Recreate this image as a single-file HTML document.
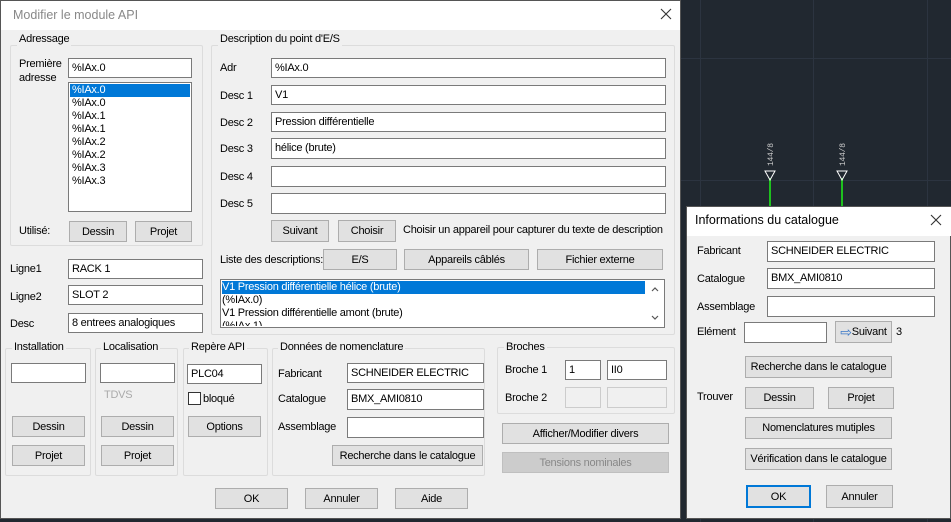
<!DOCTYPE html>
<html><head><meta charset="utf-8"><style>
*{box-sizing:border-box;margin:0;padding:0}
body{width:951px;height:522px;overflow:hidden;background:#212830;font-family:"Liberation Sans",sans-serif;font-size:11px;letter-spacing:-0.25px;color:#000;position:relative}
div,span{position:absolute}
.t{white-space:nowrap;line-height:14px}
.in{background:#fff;border:1px solid #7a7a7a;padding:2px 3px;white-space:nowrap;line-height:14px;overflow:hidden}
.dis{background:#f0f0f0;border:1px solid #ccc}
.b{background:#e1e1e1;border:1px solid #adadad;text-align:center;white-space:nowrap;display:flex;align-items:center;justify-content:center}
.g{border:1px solid #dcdcdc;border-radius:2px}
.gl{background:#f0f0f0;padding:0 2px;white-space:nowrap;line-height:14px}
.grid{background:#2c3440}
.x{font-size:16px;color:#333;font-weight:normal}
</style></head><body>
<div class="grid" style="left:700px;top:0;width:1px;height:522px"></div>
<div class="grid" style="left:813px;top:0;width:1px;height:522px"></div>
<div class="grid" style="left:927px;top:0;width:1px;height:522px"></div>
<div class="grid" style="left:681px;top:58px;width:270px;height:1px"></div>
<div class="grid" style="left:681px;top:180px;width:270px;height:1px"></div>
<div style="left:769px;top:178px;width:2px;height:30px;background:#1ec01e"></div>
<div style="left:841px;top:178px;width:2px;height:30px;background:#1ec01e"></div>
<svg style="position:absolute;left:760px;top:140px" width="100" height="45"><g fill="none" stroke="#fff" stroke-width="1"><path d="M5 31 L15 31 L10 40 Z"/><path d="M77 31 L87 31 L82 40 Z"/></g><text transform="translate(13,26) rotate(-90)" fill="#ccc" font-size="8" font-family="Liberation Mono">144/8</text><text transform="translate(85,26) rotate(-90)" fill="#ccc" font-size="8" font-family="Liberation Mono">144/8</text></svg>

<div style="left:0;top:0;width:681px;height:519px;background:#f0f0f0;border:1px solid #555"></div>
<div style="left:1px;top:1px;width:679px;height:29px;background:#fff"></div>
<div class="t" style="left:13px;top:8px;font-size:12.5px;color:#888;letter-spacing:0">Modifier le module API</div>
<svg style="position:absolute;left:660px;top:8px" width="12" height="12"><path d="M1 1L11 11M11 1L1 11" stroke="#333" stroke-width="1.1"/></svg>

<div class="g" style="left:10px;top:45px;width:193px;height:201px"></div>
<div class="gl" style="left:17px;top:32px">Adressage</div>
<div class="t" style="left:19px;top:57px">Première<br>adresse</div>
<div class="in" style="left:68px;top:58px;width:124px;height:20px">%IAx.0</div>
<div class="in" style="left:68px;top:82px;width:124px;height:130px;padding:1px"></div>
<div style="left:70px;top:84px;width:120px;height:13px;background:#0078d7"></div>
<div class="t" style="left:72px;top:84px;line-height:13px;color:#000">
<span style="position:static;color:#fff">%IAx.0</span><br>%IAx.0<br>%IAx.1<br>%IAx.1<br>%IAx.2<br>%IAx.2<br>%IAx.3<br>%IAx.3</div>
<div class="t" style="left:19px;top:224px">Utilisé:</div>
<div class="b" style="left:69px;top:221px;width:58px;height:21px">Dessin</div>
<div class="b" style="left:135px;top:221px;width:57px;height:21px">Projet</div>

<div class="g" style="left:211px;top:45px;width:464px;height:290px"></div>
<div class="gl" style="left:218px;top:32px">Description du point d'E/S</div>
<div class="t" style="left:220px;top:61px">Adr</div>
<div class="t" style="left:220px;top:89px">Desc 1</div>
<div class="t" style="left:220px;top:116px">Desc 2</div>
<div class="t" style="left:220px;top:142px">Desc 3</div>
<div class="t" style="left:220px;top:170px">Desc 4</div>
<div class="t" style="left:220px;top:197px">Desc 5</div>
<div class="in" style="left:271px;top:58px;width:395px;height:20px">%IAx.0</div>
<div class="in" style="left:271px;top:85px;width:395px;height:20px">V1</div>
<div class="in" style="left:271px;top:112px;width:395px;height:20px">Pression différentielle</div>
<div class="in" style="left:271px;top:138px;width:395px;height:21px">hélice (brute)</div>
<div class="in" style="left:271px;top:166px;width:395px;height:21px"></div>
<div class="in" style="left:271px;top:193px;width:395px;height:21px"></div>
<div class="b" style="left:271px;top:220px;width:58px;height:22px">Suivant</div>
<div class="b" style="left:338px;top:220px;width:58px;height:22px">Choisir</div>
<div class="t" style="left:403px;top:223px">Choisir un appareil pour capturer du texte de description</div>
<div class="t" style="left:220px;top:253px">Liste des descriptions:</div>
<div class="b" style="left:323px;top:249px;width:74px;height:21px">E/S</div>
<div class="b" style="left:404px;top:249px;width:125px;height:21px">Appareils câblés</div>
<div class="b" style="left:537px;top:249px;width:126px;height:21px">Fichier externe</div>
<div class="in" style="left:220px;top:279px;width:445px;height:49px;padding:0"></div>
<div style="left:222px;top:281px;width:423px;height:13px;background:#0078d7"></div>
<div style="left:222px;top:281px;width:423px;height:45px;overflow:hidden" class="t"><div class="t" style="position:static;line-height:13px"><span style="position:static;color:#fff">V1 Pression différentielle hélice (brute)</span><br>(%IAx.0)<br>V1 Pression différentielle amont (brute)<br>(%IAx.1)</div></div>
<svg style="position:absolute;left:649px;top:285px" width="12" height="40"><path d="M3 6L6 3L9 6M3 31L6 34L9 31" fill="none" stroke="#555" stroke-width="1.2"/></svg>

<div class="t" style="left:10px;top:262px">Ligne1</div>
<div class="t" style="left:10px;top:290px">Ligne2</div>
<div class="t" style="left:10px;top:317px">Desc</div>
<div class="in" style="left:68px;top:259px;width:135px;height:20px">RACK 1</div>
<div class="in" style="left:68px;top:285px;width:135px;height:20px">SLOT 2</div>
<div class="in" style="left:68px;top:313px;width:135px;height:20px">8 entrees analogiques</div>

<div class="g" style="left:5px;top:348px;width:86px;height:128px"></div>
<div class="gl" style="left:12px;top:340px">Installation</div>
<div class="in" style="left:11px;top:363px;width:75px;height:20px"></div>
<div class="b" style="left:12px;top:416px;width:73px;height:21px">Dessin</div>
<div class="b" style="left:12px;top:445px;width:73px;height:21px">Projet</div>

<div class="g" style="left:95px;top:348px;width:83px;height:128px"></div>
<div class="gl" style="left:101px;top:340px">Localisation</div>
<div class="in" style="left:100px;top:363px;width:75px;height:20px"></div>
<div class="t" style="left:104px;top:388px;color:#aaa">TDVS</div>
<div class="b" style="left:101px;top:416px;width:73px;height:21px">Dessin</div>
<div class="b" style="left:101px;top:445px;width:73px;height:21px">Projet</div>

<div class="g" style="left:183px;top:348px;width:85px;height:128px"></div>
<div class="gl" style="left:189px;top:340px">Repère API</div>
<div class="in" style="left:187px;top:364px;width:75px;height:20px">PLC04</div>
<div style="left:188px;top:392px;width:13px;height:13px;background:#fff;border:1px solid #333"></div>
<div class="t" style="left:203px;top:392px">bloqué</div>
<div class="b" style="left:188px;top:416px;width:73px;height:21px">Options</div>

<div class="g" style="left:272px;top:348px;width:213px;height:128px"></div>
<div class="gl" style="left:278px;top:340px">Données de nomenclature</div>
<div class="t" style="left:278px;top:367px">Fabricant</div>
<div class="t" style="left:278px;top:392px">Catalogue</div>
<div class="t" style="left:278px;top:420px">Assemblage</div>
<div class="in" style="left:347px;top:363px;width:137px;height:20px">SCHNEIDER ELECTRIC</div>
<div class="in" style="left:347px;top:389px;width:137px;height:21px">BMX_AMI0810</div>
<div class="in" style="left:347px;top:417px;width:137px;height:21px"></div>
<div class="b" style="left:332px;top:445px;width:151px;height:21px">Recherche dans le catalogue</div>

<div class="g" style="left:497px;top:347px;width:178px;height:67px"></div>
<div class="gl" style="left:504px;top:340px">Broches</div>
<div class="t" style="left:505px;top:363px">Broche 1</div>
<div class="t" style="left:505px;top:391px">Broche 2</div>
<div class="in" style="left:565px;top:360px;width:36px;height:20px">1</div>
<div class="in" style="left:607px;top:360px;width:60px;height:20px">II0</div>
<div class="in dis" style="left:565px;top:387px;width:36px;height:21px"></div>
<div class="in dis" style="left:607px;top:387px;width:60px;height:21px"></div>
<div class="b" style="left:502px;top:423px;width:167px;height:21px">Afficher/Modifier divers</div>
<div class="b" style="left:502px;top:452px;width:167px;height:21px;background:#ccc;border-color:#bfbfbf;color:#888">Tensions nominales</div>

<div class="b" style="left:215px;top:488px;width:73px;height:21px">OK</div>
<div class="b" style="left:305px;top:488px;width:73px;height:21px">Annuler</div>
<div class="b" style="left:395px;top:488px;width:73px;height:21px">Aide</div>

<div style="left:686px;top:206px;width:265px;height:313px;background:#f0f0f0;border:1px solid #555"></div>
<div style="left:687px;top:207px;width:264px;height:29px;background:#fff"></div>
<div class="t" style="left:695px;top:213px;font-size:12.5px;letter-spacing:0">Informations du catalogue</div>
<svg style="position:absolute;left:930px;top:214px" width="12" height="12"><path d="M1 1L11 11M11 1L1 11" stroke="#333" stroke-width="1.1"/></svg>
<div class="t" style="left:697px;top:244px">Fabricant</div>
<div class="t" style="left:697px;top:272px">Catalogue</div>
<div class="t" style="left:697px;top:300px">Assemblage</div>
<div class="t" style="left:697px;top:325px">Elément</div>
<div class="in" style="left:767px;top:241px;width:168px;height:21px">SCHNEIDER ELECTRIC</div>
<div class="in" style="left:767px;top:268px;width:168px;height:21px">BMX_AMI0810</div>
<div class="in" style="left:767px;top:296px;width:168px;height:21px"></div>
<div class="in" style="left:744px;top:322px;width:83px;height:21px"></div>
<div class="b" style="left:835px;top:321px;width:57px;height:22px"><span style="position:static;color:#3a78c8;font-size:14px">⇨</span>Suivant</div>
<div class="t" style="left:896px;top:325px">3</div>
<div class="b" style="left:745px;top:356px;width:147px;height:22px">Recherche dans le catalogue</div>
<div class="t" style="left:697px;top:390px">Trouver</div>
<div class="b" style="left:745px;top:387px;width:69px;height:22px">Dessin</div>
<div class="b" style="left:828px;top:387px;width:66px;height:22px">Projet</div>
<div class="b" style="left:745px;top:417px;width:147px;height:22px">Nomenclatures mutiples</div>
<div class="b" style="left:745px;top:448px;width:147px;height:22px">Vérification dans le catalogue</div>
<div class="b" style="left:746px;top:485px;width:65px;height:23px;border:2px solid #0078d7">OK</div>
<div class="b" style="left:826px;top:485px;width:67px;height:23px">Annuler</div>
</body></html>
